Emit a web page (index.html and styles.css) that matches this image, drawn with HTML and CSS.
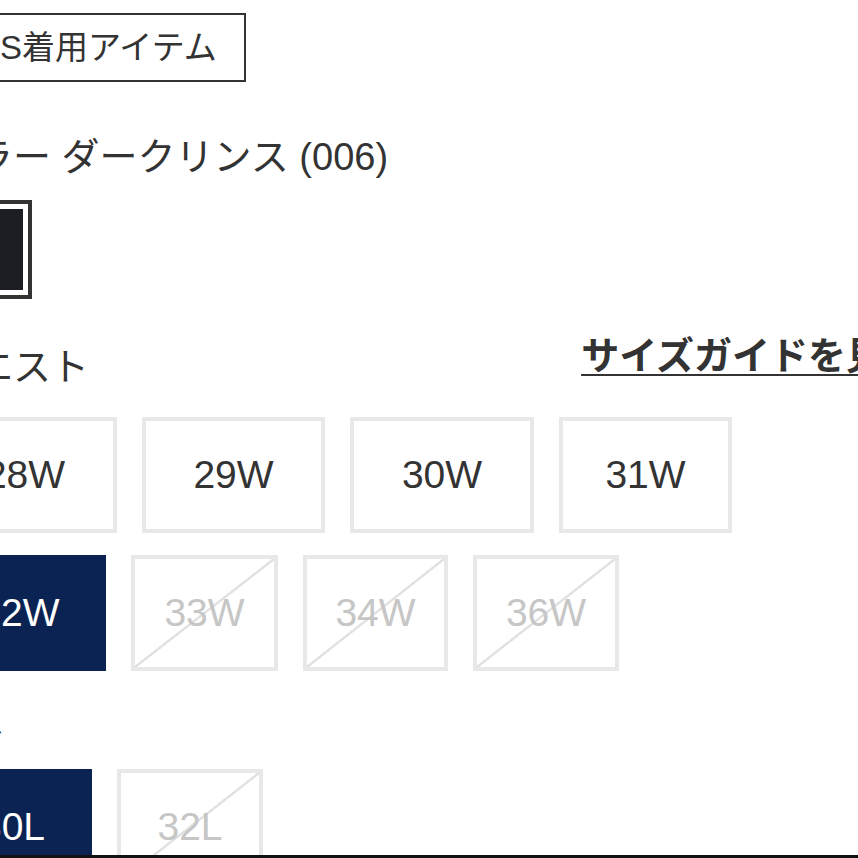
FILE: index.html
```html
<!DOCTYPE html>
<html lang="ja">
<head>
<meta charset="utf-8">
<title>商品オプション</title>
<link rel="stylesheet" href="styles.css">
</head>
<body>
<div class="page">
  <div class="badge">XS着用アイテム</div>

  <div class="label color-label">カラー ダークリンス (006)</div>
  <div class="swatch"><div class="swatch-img"></div></div>

  <div class="label-row">
    <div class="label">ウエスト</div>
    <a class="guide" href="#">サイズガイドを見る</a>
  </div>

  <div class="sizes">
    <div class="size-row">
      <div class="opt w184">28W</div>
      <div class="opt w183">29W</div>
      <div class="opt w184">30W</div>
      <div class="opt w173">31W</div>
    </div>
    <div class="size-row">
      <div class="opt w173 selected">32W</div>
      <div class="opt w147 disabled">33W</div>
      <div class="opt w145 disabled">34W</div>
      <div class="opt w146 disabled">36W</div>
    </div>
  </div>

  <div class="label length-label">レングス</div>

  <div class="sizes">
    <div class="size-row">
      <div class="opt w159 selected">30L</div>
      <div class="opt w146 disabled">32L</div>
    </div>
  </div>
</div>
<div class="bottom-bar"></div>
</body>
</html>
```
FILE: styles.css
```css
html, body {
  margin: 0;
  padding: 0;
  background: #fff;
}
body {
  width: 858px;
  height: 858px;
  overflow: hidden;
  position: relative;
  font-family: "Liberation Sans", "Noto Sans CJK JP", sans-serif;
  color: #333;
}
.page {
  width: 985px;
  margin-left: -63px;
  padding-top: 13px;
}
.badge {
  display: inline-block;
  box-sizing: border-box;
  height: 69px;
  border: 2px solid #333;
  padding: 0 27px 0 39px;
  font-size: 33px;
  line-height: 65px;
  white-space: nowrap;
}
.label {
  font-size: 38px;
  line-height: 44px;
  white-space: nowrap;
}
.color-label {
  margin-top: 53px;
}
.swatch {
  box-sizing: border-box;
  width: 95px;
  height: 99px;
  margin-top: 21px;
  border: 4px solid #333;
  padding: 5px;
}
.swatch-img {
  width: 100%;
  height: 100%;
  background: #1d1e23;
}
.label-row {
  margin-top: 46px;
  display: flex;
  justify-content: space-between;
  align-items: flex-start;
}
.guide {
  font-size: 38px;
  font-weight: bold;
  line-height: 22px;
  color: #333;
  text-decoration: underline;
  text-decoration-thickness: 2px;
  text-underline-offset: 5px;
  white-space: nowrap;
}
.sizes {
  margin-left: -4px;
  margin-top: 28px;
  display: flex;
  flex-direction: column;
  gap: 22px;
}
.size-row {
  display: flex;
  gap: 25px;
}
.opt {
  box-sizing: border-box;
  height: 116px;
  border: 4px solid #e8e8e8;
  display: flex;
  align-items: center;
  justify-content: center;
  font-size: 39px;
  color: #333;
  flex: none;
}
.w184 { width: 184px; }
.w183 { width: 183px; }
.w173 { width: 173px; }
.w159 { width: 159px; }
.w147 { width: 147px; }
.w146 { width: 146px; }
.w145 { width: 145px; }
.opt.selected {
  background: #0b2352;
  border-color: #0b2352;
  color: #fff;
}
.opt.disabled {
  color: #c6c6c6;
  background: linear-gradient(to bottom right, transparent calc(50% - 1.5px), #e2e2e2 calc(50% - 1px), #e2e2e2 calc(50% + 1px), transparent calc(50% + 1.5px));
}
.length-label {
  margin-top: 27px;
  margin-left: -84px;
}
.sizes + .length-label + .sizes {
  margin-top: 27px;
}
.bottom-bar {
  position: absolute;
  left: 0;
  right: 0;
  bottom: 0;
  height: 3px;
  background: #111;
}
```
